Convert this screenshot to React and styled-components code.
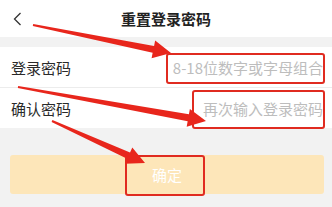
import React from 'react';
import styled, { createGlobalStyle } from 'styled-components';

const GlobalStyle = createGlobalStyle`
  html, body {
    margin: 0;
    padding: 0;
    background: #f2f2f2;
    font-family: "Noto Sans CJK SC", "Noto Sans", sans-serif;
  }
`

const Page = styled.div`
  position: relative;
  width: 332px;
  height: 207px;
  overflow: hidden;
  background: #f2f2f2;
`
const Header = styled.div`
  height: 37px;
  background: #fff;
  display: flex;
  align-items: center;
  justify-content: center;
  position: relative;
`
const BackButton = styled.div`
  position: absolute;
  left: 11px;
  top: 11px;
  width: 14px;
  height: 16px;
  display: flex;
`
const Title = styled.div`
  font-size: 15px;
  font-weight: 700;
  color: #222;
`
const Form = styled.div`
  margin-top: 10px;
  background: #fff;
`
const Row = styled.div`
  height: 40px;
  display: flex;
  align-items: center;
  justify-content: space-between;
  padding: 0 9px 0 11px;
  border-bottom: ${p => (p.last ? 'none' : '1px solid #ececec')};
`
const Label = styled.div`
  font-size: 15px;
  color: #2a2a2a;
`
const Placeholder = styled.div`
  font-size: 15px;
  color: #bdbdbd;
`
const ButtonWrap = styled.div`
  padding: 27px 8px 0 10px;
`
const SubmitButton = styled.div`
  height: 39px;
  border-radius: 3px;
  background: #fde6b9;
  color: #fff;
  font-size: 15px;
  display: flex;
  align-items: center;
  justify-content: center;
`
const Overlay = styled.svg`
  position: absolute;
  left: 0;
  top: 0;
  pointer-events: none;
`
const Mark = styled.div`
  position: absolute;
  left: ${p => p.x}px;
  top: ${p => p.y}px;
  width: ${p => p.w}px;
  height: ${p => p.h}px;
  border: 2px solid #e02b20;
  border-radius: 3px;
  box-sizing: border-box;
`

// tapered arrow polygon from tail to tip
function arrowPoints(x1, y1, x2, y2) {
  const dx = x2 - x1;
  const dy = y2 - y1;
  const len = Math.sqrt(dx * dx + dy * dy);
  const ux = dx / len;
  const uy = dy / len;
  const nx = -uy;
  const ny = ux;
  const headLen = 18;
  const bx = x2 - ux * headLen;
  const by = y2 - uy * headLen;
  const pt = (x, y, w) => [x + nx * w, y + ny * w];
  const pts = [
    pt(x1, y1, 1),
    pt(bx, by, 3.5),
    pt(bx, by, 9),
    [x2, y2],
    pt(bx, by, -9),
    pt(bx, by, -3.5),
    pt(x1, y1, -1),
  ];
  return pts.map(p => p.join(',')).join(' ');
}

const arrows = [
  [33, 25, 171, 53],
  [18, 87, 206, 121],
  [52, 121, 145, 163],
];

const marks = [
  { x: 166, y: 53, w: 159, h: 31 },
  { x: 192, y: 90, w: 133, h: 39 },
  { x: 125, y: 155, w: 80, h: 41 },
];

class App extends React.Component {
  render() {
    return (
      <Page>
        <GlobalStyle />
        <Header>
          <BackButton>
            <svg width="14" height="16" viewBox="0 0 14 16">
              <path d="M9.5 2 L3.5 8 L9.5 14" fill="none" stroke="#333" strokeWidth="1.3" />
            </svg>
          </BackButton>
          <Title>重置登录密码</Title>
        </Header>
        <Form>
          <Row>
            <Label>登录密码</Label>
            <Placeholder>8-18位数字或字母组合</Placeholder>
          </Row>
          <Row last>
            <Label>确认密码</Label>
            <Placeholder>再次输入登录密码</Placeholder>
          </Row>
        </Form>
        <ButtonWrap>
          <SubmitButton>确定</SubmitButton>
        </ButtonWrap>
        {marks.map((m, i) => (
          <Mark key={i} {...m} />
        ))}
        <Overlay width="332" height="207" viewBox="0 0 332 207">
          {arrows.map((a, i) => (
            <polygon key={i} points={arrowPoints(...a)} fill="#e8261c" />
          ))}
        </Overlay>
      </Page>
    );
  }
}

export default App;
